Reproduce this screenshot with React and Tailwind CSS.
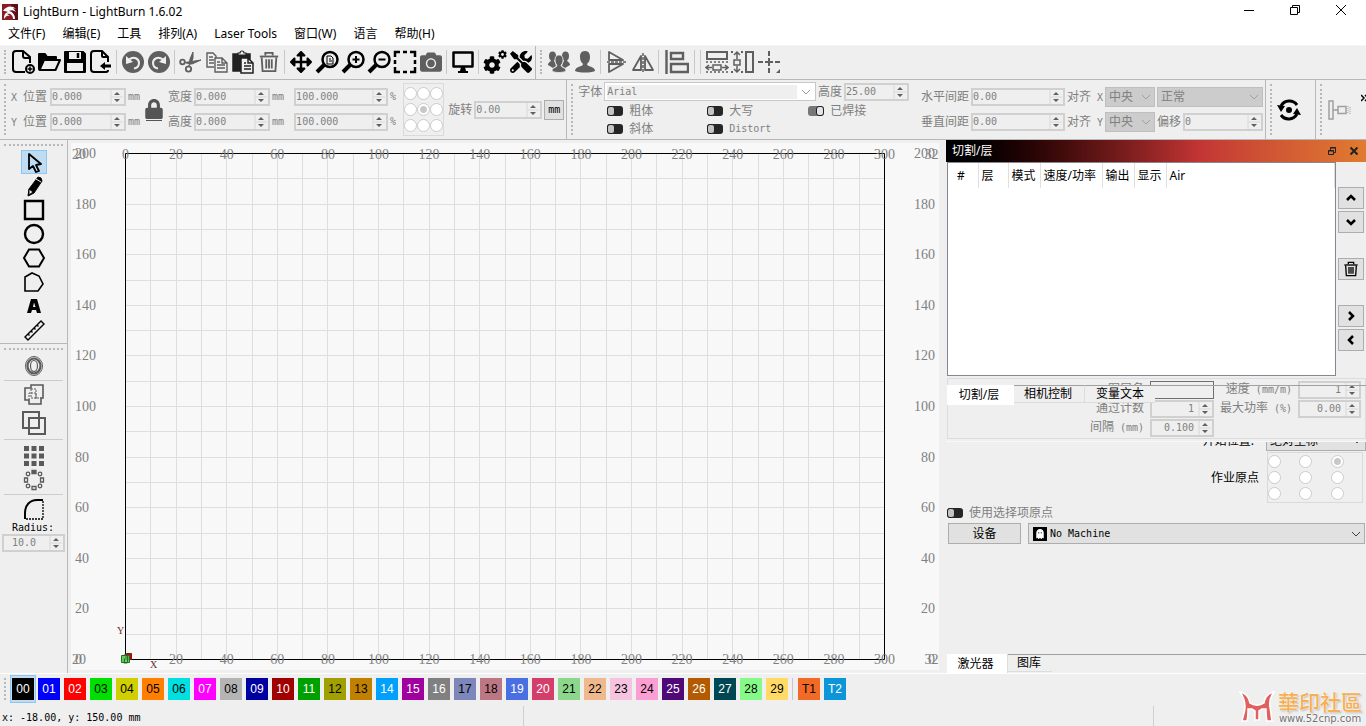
import { FaArrowsAlt, FaCamera, FaCog, FaLock, FaTools, FaGhost } from 'react-icons/fa'

const LAYERS = [
    { name: '00', className: 'bg-[#000000] text-white' },
    { name: '01', className: 'bg-[#0000ff] text-white' },
    { name: '02', className: 'bg-[#ff0000] text-white' },
    { name: '03', className: 'bg-[#00e000] text-black' },
    { name: '04', className: 'bg-[#d0d000] text-black' },
    { name: '05', className: 'bg-[#ff8000] text-black' },
    { name: '06', className: 'bg-[#00e0e0] text-black' },
    { name: '07', className: 'bg-[#ff00ff] text-white' },
    { name: '08', className: 'bg-[#b4b4b4] text-black' },
    { name: '09', className: 'bg-[#0000a0] text-white' },
    { name: '10', className: 'bg-[#a00000] text-white' },
    { name: '11', className: 'bg-[#00a000] text-white' },
    { name: '12', className: 'bg-[#a0a000] text-black' },
    { name: '13', className: 'bg-[#c08000] text-black' },
    { name: '14', className: 'bg-[#00a0ff] text-white' },
    { name: '15', className: 'bg-[#a000a0] text-white' },
    { name: '16', className: 'bg-[#808080] text-white' },
    { name: '17', className: 'bg-[#7d87b9] text-black' },
    { name: '18', className: 'bg-[#bb7784] text-black' },
    { name: '19', className: 'bg-[#4a6fe3] text-white' },
    { name: '20', className: 'bg-[#d33f6a] text-white' },
    { name: '21', className: 'bg-[#8cd78c] text-black' },
    { name: '22', className: 'bg-[#f0b98d] text-black' },
    { name: '23', className: 'bg-[#f6c4e1] text-black' },
    { name: '24', className: 'bg-[#fa9ed4] text-black' },
    { name: '25', className: 'bg-[#500a78] text-white' },
    { name: '26', className: 'bg-[#b45a00] text-white' },
    { name: '27', className: 'bg-[#004754] text-white' },
    { name: '28', className: 'bg-[#86fa88] text-black' },
    { name: '29', className: 'bg-[#ffdb66] text-black' }
]

const TOOL_LAYERS = [
    { name: 'T1', className: 'bg-[#f36926] text-black' },
    { name: 'T2', className: 'bg-[#0c96d9] text-white' }
]

const MENUS = ['文件(F)', '编辑(E)', '工具', '排列(A)', 'Laser Tools', '窗口(W)', '语言', '帮助(H)']

/* ---------- icons ---------- */

function Svg({ children, size = 24, ...props }) {
    return (
        <svg width={size} height={size} viewBox="0 0 24 24" fill="none" stroke="currentColor" aria-hidden="true" className="shrink-0" {...props}>
            {children}
        </svg>
    )
}

const NewIcon = () => (
    <Svg strokeWidth="2">
        <path d="M14 22H5a3 3 0 0 1-3-3V4a3 3 0 0 1 3-3h7l7 6v6M12 1v5a2 2 0 0 0 2 2h5" />
        <circle cx="19" cy="19" r="4" />
        <path d="M19 16.500v5M16.500 19h5" strokeWidth="1.500" />
    </Svg>
)

const OpenIcon = () => (
    <Svg strokeWidth="2" strokeLinejoin="round">
        <path d="M2 19V4h6l2 3h9v3H7z" fill="currentColor" />
        <path d="M2.500 20 7 10h16l-4.500 10z" fill="#efefef" />
    </Svg>
)

const SaveIcon = () => (
    <Svg strokeWidth="2" strokeLinejoin="round">
        <path d="M2 2h18l2 2v18H2z" fill="currentColor" />
        <path d="M4 13h16v8H4z" fill="#efefef" stroke="none" />
        <path d="M6 2h12v7H6z" fill="#efefef" stroke="none" />
        <path d="M15 3v5" strokeWidth="2.500" />
    </Svg>
)

const ExportIcon = () => (
    <Svg strokeWidth="2">
        <path d="M19 20a2 2 0 0 1-2 2H5a3 3 0 0 1-3-3V4a3 3 0 0 1 3-3h8l6 6v5M13 1v5a1 1 0 0 0 1 1h5" />
        <path d="M11 16l5-4v2.500h6v3h-6V20z" fill="currentColor" stroke="none" />
    </Svg>
)

const UndoIcon = ({ flip }) => (
    <Svg>
        <g transform={flip ? 'translate(24 0) scale(-1 1)' : undefined}>
            <circle cx="12" cy="12" r="11" fill="currentColor" stroke="none" />
            <path d="M8 9.500c5-3.500 10-1 10 3.500 0 3-2 5-5 5.500" stroke="#efefef" strokeWidth="2" />
            <path d="M5 6v8l7-2z" fill="#efefef" stroke="none" />
        </g>
    </Svg>
)

const CutIcon = () => (
    <Svg strokeWidth="1.800">
        <circle cx="3.500" cy="12" r="2.300" />
        <circle cx="9.500" cy="19" r="2.700" />
        <path d="M6 12.500l16-2.500-9 4-6-1M10 16l1-7 3-7v6l-2 6" fill="currentColor" strokeWidth="1" />
    </Svg>
)

const CopyIcon = () => (
    <Svg strokeWidth="1.400">
        <path d="M9 17H2V3h6l3 3v2M4 7h4M4 10h5M4 13h5" />
        <path d="M10 8h7l5 5v9H10zM17 8v5h5M12 12h3M12 15h8M12 18h8" fill="#efefef" />
    </Svg>
)

const PasteIcon = () => (
    <Svg strokeWidth="1.500">
        <path d="M2 4h17v5h-8v12H2z" fill="currentColor" />
        <path d="M7 5V3h2a2 2 0 0 1 4 0h2v2z" fill="#efefef" strokeWidth="1.200" />
        <path d="M10 8h7l5 5v10H10zM17 8v5h5M13 13h2M13 16h7M13 19h7" fill="#efefef" />
    </Svg>
)

const TrashIcon = ({ size }) => (
    <Svg size={size} strokeWidth="2">
        <path d="M2 5h20v2H2z" fill="currentColor" stroke="none" />
        <path d="M8 5V2h8v3M4 7l1 15h14l1-15M9 9v10M12 9v10M15 9v10" />
    </Svg>
)

const ZoomIcon = ({ children }) => (
    <Svg strokeWidth="3">
        <circle cx="15" cy="9.500" r="7.500" strokeWidth="2.500" />
        <path d="M9 15l-7 7" strokeWidth="4" />
        {children}
    </Svg>
)

const MarqueeIcon = () => (
    <Svg strokeWidth="2.500">
        <path d="M2 7V2h5M17 2h5v5M22 17v5h-5M7 22H2v-5M10 2h4M10 22h4M2 10v4M22 10v4" />
    </Svg>
)

const MonitorIcon = () => (
    <Svg strokeWidth="2.500">
        <path d="M2.500 2.500h19v14h-19z" strokeLinejoin="round" />
        <path d="M10 17h4l1 4h2v2H7v-2h2z" fill="currentColor" stroke="none" />
    </Svg>
)

const GearsIcon = () => (
    <Svg>
        <FaCog x="0" y="6" width="18" height="18" size={18} />
        <FaCog x="15" y="0" width="9" height="9" size={9} />
    </Svg>
)

const UsersIcon = () => (
    <Svg fill="currentColor" stroke="none">
        <ellipse cx="5.500" cy="6" rx="3.500" ry="4.500" />
        <ellipse cx="18.500" cy="6" rx="3.500" ry="4.500" />
        <path d="M1 15c0-3 2-2 3-5h3l2 6-3 2zM23 15c0-3-2-2-3-5h-3l-2 6 3 2z" />
        <path d="M12 5c3 0 4 2 4 5s-1 4-2 5c0 3 5 2 5 6-3 2-11 2-14 0 0-4 5-3 5-6-1-1-2-2-2-5s1-5 4-5z" stroke="#efefef" strokeWidth=".8" />
    </Svg>
)

const UserIcon = () => (
    <Svg fill="currentColor" stroke="none">
        <path d="M12 1c4 0 5 3 5 6s-1 5-3 7c0 3 8 2 8 7-5 2-15 2-20 0 0-5 8-4 8-7-2-2-3-4-3-7s1-6 5-6z" />
    </Svg>
)

const FlipIcon = ({ turned }) => (
    <Svg strokeWidth="1.800">
        <g transform={turned ? 'rotate(-90 12 12)' : undefined}>
            <path d="M4 2v8h14zM4 22v-8h14z" strokeLinejoin="round" />
            <path d="M2 12h20" strokeDasharray="3 1" strokeWidth="1.500" />
        </g>
    </Svg>
)

const AlignIcon = () => (
    <Svg strokeWidth="2.400">
        <path d="M1.500 0v24M6 3h12v6H6zM6 14h17v8H6z" />
    </Svg>
)

const SpreadHIcon = () => (
    <Svg strokeWidth="2">
        <path d="M2 2h20v7H2z" />
        <path d="M1 12h22M1 22h22" strokeDasharray="2 2" strokeWidth="1.500" />
        <path d="M8 15h8v5H8zM1 17.500h6M23 17.500h-6M4 15l-3 2.500 3 2.500M20 15l3 2.500-3 2.500" strokeWidth="1.500" />
    </Svg>
)

const SpreadVIcon = () => (
    <Svg strokeWidth="2">
        <path d="M15 2h7v20h-7z" />
        <path d="M1 1v22M11 1v22" strokeDasharray="2 18" strokeWidth="2" />
        <path d="M3 10h6v5H3zM6 2v7M6 22v-6M3 5l3-3 3 3M3 19l3 3 3-3" strokeWidth="1.500" />
    </Svg>
)

const CenterIcon = () => (
    <Svg strokeWidth="2">
        <path d="M1 12h5M8 12h8M18 12h5M12 1v5M12 8v8M12 18v5" />
        <path d="M23 19v4h-4z" fill="currentColor" stroke="none" />
    </Svg>
)

const CursorIcon = () => (
    <Svg strokeWidth="1.800" strokeLinejoin="round">
        <path d="M7 4v15l4-3 3 6 3-1-3-6 5-1z" />
    </Svg>
)

const PencilIcon = () => (
    <Svg strokeWidth="1">
        <path d="M16 3l3 1 1 3-8 12-6 3 1-7z" fill="currentColor" />
        <path d="M7 15l4 3-4 3z" fill="#efefef" />
        <path d="M14 5l5 3" stroke="#efefef" />
    </Svg>
)

const TextIcon = () => (
    <Svg fill="currentColor" stroke="none" fillRule="evenodd">
        <path d="M9 5h6l4 14h-4l-1-3h-4l-1 3H5zM11 13h2.500L12 8.500z" />
    </Svg>
)

const RulerIcon = () => (
    <Svg strokeWidth="1.400">
        <path d="M3 19L19 3l3 3L6 22zM6 16l1.500 1.500M9 13l1.500 1.500M12 10l1.500 1.500M15 7l1.500 1.500" />
    </Svg>
)

const OffsetIcon = () => (
    <Svg strokeWidth="1.500">
        <ellipse cx="12" cy="12" rx="8.500" ry="9.500" strokeWidth="1" />
        <ellipse cx="12" cy="12" rx="6.500" ry="7.500" strokeWidth="2.200" />
        <ellipse cx="12" cy="12" rx="3.500" ry="5.500" strokeWidth="1.200" />
    </Svg>
)

const UnionIcon = () => (
    <Svg strokeWidth="1.600">
        <path d="M9 2h12v13h-2v6H7v-4H3V5h6z" />
        <path d="M9 6v9h10M7 17v-7h7v7M14 15V6H9" strokeDasharray="2 1" strokeWidth="1" />
    </Svg>
)

const SubtractIcon = () => (
    <Svg strokeWidth="2">
        <path d="M1 1h16v16H1zM7 7h16v16H7z" />
    </Svg>
)

const GridIcon = () => (
    <Svg strokeWidth="5" strokeDasharray="5 2.500">
        <path d="M2 4.500h20M2 12h20M2 19.500h20" />
    </Svg>
)

const DialIcon = () => (
    <Svg strokeWidth="1.300">
        <path d="M10 2.500h4v3h-4z" fill="currentColor" />
        <path d="M10 18.500h4v3h-4zM2.500 10h3v4h-3zM18.500 10h3v4h-3z" />
        <circle cx="6" cy="6" r="1.800" />
        <circle cx="18" cy="6" r="1.800" />
        <circle cx="6" cy="18" r="1.800" />
        <circle cx="18" cy="18" r="1.800" />
    </Svg>
)

const RadiusIcon = () => (
    <Svg strokeWidth="2">
        <path d="M3 22v-6C3 8 8 3 15 3h6" />
        <path d="M21 4v18H3" strokeDasharray="2 1" strokeWidth="1.300" />
    </Svg>
)

const RotateIcon = () => (
    <Svg strokeWidth="3">
        <path d="M4 8a9.500 9.500 0 0 1 16-1M20 16a9.500 9.500 0 0 1-16 1" />
        <circle cx="12" cy="12" r="3" fill="currentColor" stroke="none" />
        <path d="M0 7l8 1-4 6zM24 17l-8-1 4-6z" fill="currentColor" stroke="none" />
    </Svg>
)

const DockIcon = () => (
    <Svg strokeWidth="1.500" stroke="#a0a0a0">
        <path d="M2 3h4v18H2zM6 12h5M11 8.500h8v7h-8z" />
        <path d="M21 8v8M23 9v7" strokeDasharray="1 1" strokeWidth="1" />
    </Svg>
)

const Chevron = ({ d, thick }) => (
    <svg width="10" height="10" viewBox="0 0 10 10" fill="none" stroke="currentColor" strokeWidth={thick ? 2.5 : 1} aria-hidden="true">
        <path d={d} />
    </svg>
)

/* ---------- controls ---------- */

function ToolButton({ label, children, className = '' }) {
    return (
        <button type="button" aria-label={label} className={`flex h-6 w-[26px] shrink-0 items-center justify-center ${className}`}>
            {children}
        </button>
    )
}

const Divider = () => <div className="mx-[2px] h-6 w-px shrink-0 border-l border-[#c8c8c8] pr-[1px]" />

const Handle = () => <div className="my-[4px] ml-[4px] mr-[5px] shrink-0 self-stretch border-l-2 border-dotted border-[#b8b8b8]" />

const HandleAcross = () => <div className="mx-[4px] my-[4px] border-t-2 border-dotted border-[#b8b8b8]" />

function Spin({ id, value, className, right, label }) {
    return (
        <div className={`flex h-[18px] shrink-0 items-center border-2 border-[#d0d0d0] ${className}`}>
            <input
                id={id}
                aria-label={label}
                defaultValue={value}
                className={`w-0 min-w-0 flex-1 bg-transparent font-['DejaVu_Sans_Mono',monospace] text-[10px] leading-[14px] text-[#808080] outline-none ${right ? 'pr-[4px] text-right' : ''}`}
            />
            <svg width="14" height="14" viewBox="0 0 14 14" className="shrink-0" aria-hidden="true">
                <path d="M1 0v14M1 7h12" stroke="#d8d8d8" />
                <path d="M4 5l3-3 3 3zM4 9l3 3 3-3z" fill="#606060" />
            </svg>
        </div>
    )
}

function Text({ htmlFor, children, mono, className = '' }) {
    return (
        <label htmlFor={htmlFor} className={`shrink-0 whitespace-pre text-[12px] leading-4 ${className}`}>
            {children}
            {mono && <span className="font-['DejaVu_Sans_Mono',monospace] text-[10px]">{mono}</span>}
        </label>
    )
}

const Unit = ({ children }) => <span className="shrink-0 font-['DejaVu_Sans_Mono',monospace] text-[10px] leading-4">{children}</span>

function Combo({ id, value, label, className, chevron = 'text-[#a0a0a0]' }) {
    return (
        <div className={`relative flex items-center border ${className}`}>
            <select id={id} aria-label={label} className="h-full w-full appearance-none bg-transparent pl-[3px] text-[12px] leading-4 outline-none">
                <option>{value}</option>
            </select>
            <span className={`pointer-events-none absolute right-[3px] ${chevron}`}>
                <Chevron d="M1 3l4 4 4-4" />
            </span>
        </div>
    )
}

function Toggle({ text, mono, on }) {
    return (
        <label className="flex items-center gap-[6px] text-[12px] leading-4">
            <input
                type="checkbox"
                defaultChecked={on}
                className="relative h-[10px] w-4 appearance-none rounded-[3px] bg-[#262626] before:absolute before:left-0 before:top-0 before:h-[10px] before:w-2 before:rounded-[3px] before:border before:border-[#202020] before:bg-[#c4c4c4] checked:bg-[#777777] checked:before:left-2 checked:before:bg-[#e4e4e4]"
            />
            {text}
            {mono && <span className="font-['DejaVu_Sans_Mono',monospace] text-[10px]">{mono}</span>}
        </label>
    )
}

function Origin({ name, checked, className }) {
    return (
        <div role="radiogroup" aria-label={name} className={`grid shrink-0 grid-cols-3 border border-[#dadada] ${className}`}>
            {Array.from({ length: 9 }, (_, i) => (
                <input
                    key={i}
                    type="radio"
                    name={name}
                    aria-label={`${name} ${i + 1}`}
                    defaultChecked={i === checked}
                    className="h-[13px] w-[13px] appearance-none rounded-full border border-[#cccccc] bg-white checked:bg-[radial-gradient(circle,#c8c8c8_0_3px,#ffffff_4px)]"
                />
            ))}
        </div>
    )
}

/* ---------- page parts ---------- */

function TitleBar() {
    return (
        <header className="bg-white text-black">
            <div className="flex h-[23px] items-center pl-[2px] pr-[19px]">
                <svg width="16" height="16" viewBox="0 0 16 16" aria-hidden="true">
                    <path d="M0 0h16v16H0z" fill="#8c1c24" />
                    <path d="M9 0h7v16h-5z" fill="#5c0f18" />
                    <path d="M1 7c3-5 9-6 13-2l-3-1 3 4c-3-2-5-2-7-1 4 1 6 4 6 8h-2c0-4-3-6-6-5l3 2c-3-1-4 0-6 3 0-4 1-6 4-7-2-1-3-1-5-1z" fill="#ffffff" />
                </svg>
                <h1 className="ml-[5px] flex-1 text-[12px] leading-4">LightBurn - LightBurn 1.6.02</h1>
                <div className="flex items-center gap-[34px] pb-[3px]">
                    <button type="button" aria-label="Minimize">
                        <svg width="12" height="12" viewBox="0 0 12 12" stroke="#000000"><path d="M1 6.500h10" /></svg>
                    </button>
                    <button type="button" aria-label="Restore">
                        <svg width="12" height="12" viewBox="0 0 12 12" stroke="#000000" fill="none"><path d="M1.500 3.500h7v7h-7zM3.500 3V1.500h7v7H9" /></svg>
                    </button>
                    <button type="button" aria-label="Close">
                        <svg width="12" height="12" viewBox="0 0 12 12" stroke="#000000"><path d="M1 1l10 10M11 1L1 11" /></svg>
                    </button>
                </div>
            </div>
            <nav className="flex h-[23px] items-center gap-[17px] border-b border-[#f4f4f4] pl-2">
                {MENUS.map(menu => (
                    <button key={menu} type="button" className="text-[12px] leading-4">{menu}</button>
                ))}
            </nav>
        </header>
    )
}

function MainToolbar() {
    return (
        <div className="flex h-[34px] items-center border-b border-[#b8b8b8] text-black">
            <div className="flex h-full items-center border-r border-[#b8b8b8] pb-px pr-px">
                <Handle />
                <div className="-ml-px flex items-center">
                    <ToolButton label="New"><NewIcon /></ToolButton>
                    <ToolButton label="Open"><OpenIcon /></ToolButton>
                    <ToolButton label="Save"><SaveIcon /></ToolButton>
                    <ToolButton label="Import"><ExportIcon /></ToolButton>
                    <Divider />
                    <ToolButton label="Undo" className="text-[#5f5f5f]"><UndoIcon /></ToolButton>
                    <ToolButton label="Redo" className="text-[#5f5f5f]"><UndoIcon flip /></ToolButton>
                    <Divider />
                    <ToolButton label="Cut" className="text-[#5f5f5f]"><CutIcon /></ToolButton>
                    <ToolButton label="Copy" className="text-[#5f5f5f]"><CopyIcon /></ToolButton>
                    <ToolButton label="Paste" className="text-[#222222]"><PasteIcon /></ToolButton>
                    <ToolButton label="Delete" className="text-[#5f5f5f]"><TrashIcon size={22} /></ToolButton>
                    <Divider />
                    <ToolButton label="Pan"><FaArrowsAlt size={22} /></ToolButton>
                    <ToolButton label="Zoom to page">
                        <ZoomIcon><path d="M12 6h4l2 2v6h-6zM14 9h2M14 11h3" strokeWidth="1" /></ZoomIcon>
                    </ToolButton>
                    <ToolButton label="Zoom in"><ZoomIcon><path d="M11.500 9.500h7M15 6v7" strokeWidth="2" /></ZoomIcon></ToolButton>
                    <ToolButton label="Zoom out"><ZoomIcon><path d="M11.500 9.500h7" strokeWidth="2" /></ZoomIcon></ToolButton>
                    <ToolButton label="Frame selection"><MarqueeIcon /></ToolButton>
                    <ToolButton label="Camera" className="text-[#5f5f5f]"><FaCamera size={22} /></ToolButton>
                    <Divider />
                    <ToolButton label="Preview"><MonitorIcon /></ToolButton>
                    <Divider />
                    <ToolButton label="Settings"><GearsIcon /></ToolButton>
                    <ToolButton label="Device settings"><FaTools size={22} /></ToolButton>
                </div>
            </div>
            <div className="flex h-full items-center pb-px text-[#5f5f5f]">
                <Handle />
                <div className="-ml-px flex items-center">
                    <ToolButton label="Group"><UsersIcon /></ToolButton>
                    <ToolButton label="Ungroup"><UserIcon /></ToolButton>
                    <Divider />
                    <ToolButton label="Flip vertical"><FlipIcon /></ToolButton>
                    <ToolButton label="Flip horizontal"><FlipIcon turned /></ToolButton>
                    <Divider />
                    <ToolButton label="Align left" className="mx-[2px]"><AlignIcon /></ToolButton>
                    <Divider />
                    <Divider />
                    <ToolButton label="Distribute horizontally"><SpreadHIcon /></ToolButton>
                    <ToolButton label="Distribute vertically"><SpreadVIcon /></ToolButton>
                    <ToolButton label="Move to centre"><CenterIcon /></ToolButton>
                </div>
            </div>
        </div>
    )
}

function Row({ children }) {
    return <div className="flex h-[18px] items-center gap-[2px]">{children}</div>
}

function PropertyToolbar() {
    return (
        <div className="flex h-[60px] border-b border-[#b8b8b8] text-[#808080]">
            <section className="flex items-center border-r border-[#b8b8b8] pr-[2px]">
                <Handle />
                <div className="flex flex-col gap-[7px]">
                    <Row>
                        <Text htmlFor="xpos" className="w-[37px]"><span className="font-['DejaVu_Sans_Mono',monospace] text-[10px]">X </span>位置</Text>
                        <Spin id="xpos" value="0.000" className="w-[76px]" /><Unit>mm</Unit>
                    </Row>
                    <Row>
                        <Text htmlFor="ypos" className="w-[37px]"><span className="font-['DejaVu_Sans_Mono',monospace] text-[10px]">Y </span>位置</Text>
                        <Spin id="ypos" value="0.000" className="w-[76px]" /><Unit>mm</Unit>
                    </Row>
                </div>
                <button type="button" aria-label="Lock aspect" className="mx-[4px] flex w-5 flex-col items-center gap-px text-[#555555]">
                    <FaLock size={20} />
                    <span className="h-px w-4 bg-[#555555]" />
                </button>
                <div className="flex flex-col gap-[7px]">
                    <Row>
                        <Text htmlFor="width">宽度</Text>
                        <Spin id="width" value="0.000" className="w-[76px]" /><Unit>mm</Unit>
                        <Spin label="宽度 %" value="100.000" className="ml-2 w-[94px]" /><Unit>%</Unit>
                    </Row>
                    <Row>
                        <Text htmlFor="height">高度</Text>
                        <Spin id="height" value="0.000" className="w-[76px]" /><Unit>mm</Unit>
                        <Spin label="高度 %" value="100.000" className="ml-2 w-[94px]" /><Unit>%</Unit>
                    </Row>
                </div>
                <Origin name="anchor" checked={4} className="ml-[7px] mr-[4px] gap-y-[3px] py-[3px]" />
                <Row>
                    <Text htmlFor="rotate">旋转</Text>
                    <Spin id="rotate" value="0.00" className="w-[68px]" />
                    <button type="button" className="h-5 w-5 border border-[#adadad] bg-[#e1e1e1] font-['DejaVu_Sans_Mono',monospace] text-[10px] text-black">mm</button>
                </Row>
            </section>
            <section className="flex min-w-0 flex-1 items-center border-r border-[#b8b8b8] pr-[2px]">
                <Handle />
                <div className="mr-3 flex min-w-0 flex-1 flex-col gap-[2px]">
                    <div className="flex items-center gap-[2px]">
                        <Text htmlFor="font">字体</Text>
                        <div className="relative flex h-[19px] min-w-0 flex-1 items-center border border-[#c8c8c8] bg-white px-[2px]">
                            <select id="font" className="h-[14px] w-full appearance-none bg-[#efefef] font-['DejaVu_Sans_Mono',monospace] text-[10px] leading-[14px] outline-none">
                                <option>Arial</option>
                            </select>
                            <span className="pointer-events-none absolute right-0 flex h-full w-[18px] items-center justify-center bg-white text-[#a0a0a0]">
                                <Chevron d="M1 3l4 4 4-4" />
                            </span>
                        </div>
                        <Text htmlFor="fontsize">高度</Text>
                        <Spin id="fontsize" value="25.00" className="w-[65px]" />
                    </div>
                    <div className="grid grid-cols-[100px_101px_1fr] gap-y-[2px] pl-[29px]">
                        <Toggle text="粗体" />
                        <Toggle text="大写" />
                        <Toggle text="已焊接" on />
                        <Toggle text="斜体" />
                        <Toggle mono="Distort" />
                    </div>
                </div>
                <div className="flex flex-col gap-[7px]">
                    <Row>
                        <Text htmlFor="hspace">水平间距</Text>
                        <Spin id="hspace" value="0.00" className="w-[94px]" />
                        <Text htmlFor="alignx" mono=" X">对齐</Text>
                        <Combo id="alignx" value="中央" className="h-5 w-[50px] border-[#bfbfbf] bg-[#cccccc]" />
                        <Combo label="模式" value="正常" className="h-5 w-[106px] border-[#bfbfbf] bg-[#cccccc]" />
                    </Row>
                    <Row>
                        <Text htmlFor="vspace">垂直间距</Text>
                        <Spin id="vspace" value="0.00" className="w-[94px]" />
                        <Text htmlFor="aligny" mono=" Y">对齐</Text>
                        <Combo id="aligny" value="中央" className="h-5 w-[50px] border-[#bfbfbf] bg-[#cccccc]" />
                        <Text htmlFor="offset">偏移</Text>
                        <Spin id="offset" value="0" className="w-20" />
                    </Row>
                </div>
            </section>
            <section className="flex items-center border-r border-[#b8b8b8] pr-[14px]">
                <Handle />
                <button type="button" aria-label="Refresh" className="text-black"><RotateIcon /></button>
            </section>
            <section className="flex items-center">
                <Handle />
                <button type="button" aria-label="Dock"><DockIcon /></button>
                <button type="button" aria-label="More" className="mb-6 ml-[10px] w-[5px] overflow-hidden text-black">
                    <svg width="8" height="8" viewBox="0 0 8 8" fill="none" stroke="currentColor" strokeWidth="1.500"><path d="M4 1l3 3-3 3M0 1l3 3-3 3" /></svg>
                </button>
            </section>
        </div>
    )
}

function SideTools() {
    const draw = [
        ['Pencil', <PencilIcon />],
        ['Rectangle', <Svg strokeWidth="2.400"><path d="M3 3h18v18H3z" /></Svg>],
        ['Ellipse', <Svg strokeWidth="2.400"><circle cx="12" cy="12" r="9" /></Svg>],
        ['Polygon', <Svg strokeWidth="2"><path d="M7 3.500h10l5 8.500-5 8.500H7L2 12z" /></Svg>],
        ['Edit nodes', <Svg strokeWidth="1.600"><path d="M3 21V7l7-4 7 3 4 8-5 7z" /></Svg>],
        ['Text', <TextIcon />],
        ['Measure', <RulerIcon />]
    ]

    return (
        <aside className="w-[68px] shrink-0 border-r border-[#b8b8b8] text-black">
            <div className="border-b border-[#b8b8b8] pb-px">
                <HandleAcross />
                <div className="flex flex-col items-center">
                    <button type="button" aria-label="Select" className="flex h-6 w-[26px] items-center justify-center border border-[#8ec6f0] bg-[#bfdcf3]"><CursorIcon /></button>
                    {draw.map(([label, icon]) => <ToolButton key={label} label={label}>{icon}</ToolButton>)}
                </div>
            </div>
            <div className="text-[#5a5a5a]">
                <HandleAcross />
                <div className="flex flex-col items-center px-1">
                    <ToolButton label="Offset"><OffsetIcon /></ToolButton>
                    <div className="my-[2px] w-full border-t border-[#cccccc]" />
                    <ToolButton label="Union"><UnionIcon /></ToolButton>
                    <ToolButton label="Subtract" className="my-[4px]"><SubtractIcon /></ToolButton>
                    <div className="mb-[4px] w-full border-t border-[#cccccc]" />
                    <ToolButton label="Grid array"><GridIcon /></ToolButton>
                    <ToolButton label="Circular array"><DialIcon /></ToolButton>
                    <div className="my-[2px] w-full border-t border-[#cccccc]" />
                    <ToolButton label="Radius tool" className="text-black"><RadiusIcon /></ToolButton>
                </div>
                <label htmlFor="radius" className="block pl-3 pt-px font-['DejaVu_Sans_Mono',monospace] text-[10px] leading-3 text-black">Radius:</label>
                <Spin id="radius" value="10.0" className="mx-[2px] w-[63px] pl-2" />
            </div>
        </aside>
    )
}

function Workspace() {
    const step = 50.6
    const xs = Array.from({ length: 29 }, (_, i) => Math.round(54 + (i + 1) * 25.3) + 0.5)
    const ys = Array.from({ length: 19 }, (_, i) => Math.round(10 + (i + 1) * 25.3) + 0.5)

    return (
        <svg viewBox="0 0 868 527" className="block h-full w-full bg-[#f8f8f8]" role="img" aria-label="workspace">
            <g stroke="#dedede">
                {xs.map(x => <path key={x} d={`M${x} 10V516`} />)}
                {ys.map(y => <path key={y} d={`M54 ${y}H813`} />)}
            </g>
            <path d="M54.500 10.500h759v506h-759z" fill="none" stroke="#000000" />
            <g fill="#808080" fontSize="14" fontFamily="'Liberation Serif', serif">
                {Array.from({ length: 17 }, (_, i) => (
                    <g key={i} textAnchor="middle">
                        <text x={54.5 + i * step} y="16">{i * 20}</text>
                        <text x={54.5 + i * step} y="521">{i * 20}</text>
                    </g>
                ))}
                {/* the -20 mark is held against the left edge */}
                <text x="1" y="16">20</text>
                <text x="1" y="521">20</text>
                {Array.from({ length: 11 }, (_, i) => (
                    <g key={i}>
                        <text x="4" y={521 - i * step}>{i * 20}</text>
                        <text x="864" y={521 - i * step} textAnchor="end">{i * 20}</text>
                    </g>
                ))}
            </g>
            <g fill="#6b2a2a" fontSize="10" fontFamily="'Liberation Serif', serif">
                <text x="46" y="491">Y</text>
                <text x="79" y="525">X</text>
            </g>
            <path d="M55.500 510.500h5v6h-5z" fill="#d00000" stroke="#702020" />
            <path d="M50.500 512.500h8v7h-8z" fill="#50d050" fillOpacity=".8" stroke="#207020" />
            <path d="M53.500 515.500v4M56.500 512.500v7" stroke="#207020" />
        </svg>
    )
}

function SideButton({ label, children, className }) {
    return (
        <button type="button" aria-label={label} className={`flex h-[22px] w-[26px] items-center justify-center border border-[#adadad] bg-[#e1e1e1] text-black ${className}`}>
            {children}
        </button>
    )
}

function CutsPanel() {
    const columns = [
        ['#', 'w-[30px] pl-[9px]'],
        ['层', 'w-[30px]'],
        ['模式', 'w-[32px]'],
        ['速度/功率', 'w-[62px]'],
        ['输出', 'w-[32px]'],
        ['显示', 'w-[32px]'],
        ['Air', '']
    ]

    return (
        <section>
            <div className="flex h-[22px] items-center bg-linear-to-r from-black via-[#c23434] via-60% to-[#e07b30] pl-[6px] pr-[7px]">
                <h2 className="flex-1 text-[12px] leading-4 text-white">切割/层</h2>
                <button type="button" aria-label="Float" className="mr-3">
                    <svg width="10" height="10" viewBox="0 0 10 10" fill="none" stroke="#222222"><path d="M1.500 4.500h5v4h-5zM3.500 4V1.500h5v5H7M3 2h6M1 5h6" /></svg>
                </button>
                <button type="button" aria-label="Close panel">
                    <svg width="10" height="10" viewBox="0 0 10 10" stroke="#222222" strokeWidth="2"><path d="M1.500 1.500l7 7M8.500 1.500l-7 7" /></svg>
                </button>
            </div>
            <div className="flex gap-[2px] pl-px pr-[2px]">
                <div className="h-[214px] min-w-0 flex-1 border border-[#828790] bg-white">
                    <table className="w-full table-fixed border-collapse">
                        <thead>
                            <tr className="h-[25px]">
                                {columns.map(([name, className]) => (
                                    <th key={name} scope="col" className={`border-r border-[#e0e0e0] p-0 pl-[3px] text-left text-[12px] font-normal leading-4 text-black ${className}`}>{name}</th>
                                ))}
                            </tr>
                        </thead>
                    </table>
                </div>
                <div className="flex flex-col pt-[25px]">
                    <SideButton label="Move up"><Chevron thick d="M1 7l4-4 4 4" /></SideButton>
                    <SideButton label="Move down" className="mt-[2px]"><Chevron thick d="M1 3l4 4 4-4" /></SideButton>
                    <SideButton label="Delete layer" className="mt-[25px]"><TrashIcon size={16} /></SideButton>
                    <SideButton label="Next" className="mt-[25px]"><Chevron thick d="M3 1l4 4-4 4" /></SideButton>
                    <SideButton label="Previous" className="mt-[2px]"><Chevron thick d="M7 1L3 5l4 4" /></SideButton>
                </div>
            </div>
            <div className="relative ml-px mt-[2px] h-[61px] border border-[#dcdcdc] text-[#808080]">
                <div className="grid grid-cols-[196px_64px_72px_63px] justify-start gap-x-[6px] gap-y-px pt-[2px] text-right">
                    <Text htmlFor="layername">图层名</Text>
                    <input id="layername" className="h-[18px] w-16 border border-[#707070] outline-none" />
                    <Text htmlFor="speed" mono=" (mm/m)">速度</Text>
                    <Spin id="speed" value="1" right className="w-[63px]" />
                    <Text htmlFor="passes">通过计数</Text>
                    <Spin id="passes" value="1" right className="w-16" />
                    <Text htmlFor="power" mono=" (%)">最大功率</Text>
                    <Spin id="power" value="0.00" right className="w-[63px]" />
                    <Text htmlFor="interval" mono=" (mm)">间隔</Text>
                    <Spin id="interval" value="0.100" right className="w-16" />
                </div>
                {/* the tab strip rides over the top rows of the form */}
                <div role="tablist" className="absolute -left-px -right-px top-[6px] flex items-start text-[12px] leading-4 text-black">
                    <button type="button" role="tab" aria-selected="true" className="h-5 w-[67px] bg-white pr-[3px]">切割/层</button>
                    <button type="button" role="tab" className="h-[18px] w-[71px] border-b border-r border-t border-[#dcdcdc] border-t-[#a0a0a0] bg-[#efefef] pr-[2px]">相机控制</button>
                    <button type="button" role="tab" className="h-[18px] w-[70px] border-b border-t border-[#dcdcdc] border-t-[#a0a0a0] bg-[#efefef]">变量文本</button>
                    <div className="flex-1 border-t border-[#a0a0a0]" />
                </div>
            </div>
        </section>
    )
}

function LaserPanel() {
    return (
        <section className="mt-[2px] flex min-h-0 flex-1 flex-col border-t border-[#f8f8f8] pl-px text-black">
            <div className="overflow-hidden">
                <div className="-mt-[12px] flex items-center justify-end gap-3">
                    <Text htmlFor="startfrom">开始位置:</Text>
                    <Combo id="startfrom" value="绝对坐标" chevron="text-[#505050]" className="h-[21px] w-[100px] border-[#adadad] bg-[#e1e1e1]" />
                </div>
            </div>
            <div className="mt-px flex items-center justify-end gap-2 pr-[3px]">
                <span className="text-[12px] leading-4">作业原点</span>
                <Origin name="job" checked={2} className="w-24 gap-y-[3px] py-[2px]" />
            </div>
            <div className="mt-px py-px text-[#808080]"><Toggle text="使用选择项原点" /></div>
            <div className="mt-px flex gap-[7px] px-px">
                <button type="button" className="h-[21px] w-[73px] border border-[#adadad] bg-[#e1e1e1] text-[12px] leading-4">设备</button>
                <div className="relative flex h-[21px] flex-1 items-center border border-[#adadad] bg-[#e1e1e1]">
                    <span className="ml-[4px] flex h-[14px] w-[14px] shrink-0 items-center justify-center bg-black text-white"><FaGhost size={10} /></span>
                    <select aria-label="Machine" className="w-full appearance-none bg-transparent pl-[3px] font-['DejaVu_Sans_Mono',monospace] text-[10px] leading-4 outline-none">
                        <option>No Machine</option>
                    </select>
                    <span className="pointer-events-none absolute right-[3px] text-[#404040]"><Chevron d="M1 3l4 4 4-4" /></span>
                </div>
            </div>
            <div role="tablist" className="mt-auto flex items-start text-[12px] leading-4">
                <button type="button" role="tab" aria-selected="true" className="h-[19px] w-[61px] border-r border-[#dcdcdc] bg-white pr-[3px]">激光器</button>
                <button type="button" role="tab" className="h-[18px] w-[44px] border-b border-t border-[#dcdcdc] border-t-[#a0a0a0] pr-[2px]">图库</button>
                <div className="flex-1 border-t border-[#a0a0a0]" />
            </div>
        </section>
    )
}

function Swatch({ name, className }) {
    return <button type="button" className={`h-[22px] w-[22px] font-['Liberation_Sans',sans-serif] text-[12px] leading-[22px] ${className}`}>{name}</button>
}

function Palette() {
    const [active, ...rest] = LAYERS

    return (
        <div className="flex h-[33px] items-center border-t border-white pb-[2px]">
            <Handle />
            <div className="-ml-px flex h-7 w-[26px] items-center justify-center border border-[#8ec6f0] bg-[#bfdcf3]">
                <Swatch {...active} />
            </div>
            <div className="ml-[2px] flex items-center gap-[4px]">
                {rest.map(layer => <Swatch key={layer.name} {...layer} />)}
                <div className="mr-px h-[22px] w-px bg-[#c8c8c8]" />
                {TOOL_LAYERS.map(layer => <Swatch key={layer.name} {...layer} />)}
            </div>
        </div>
    )
}

function Watermark() {
    return (
        <div className="absolute bottom-px right-[4px] flex items-center gap-[2px]">
            <svg width="38" height="36" viewBox="0 0 38 36" aria-hidden="true">
                <path
                    d="M2 3c5 1 9 5 10 11 4 3 10 3 14 0 1-6 5-10 10-11-3 4-5 9-4 15 1 5 1 9 2 14h-5c-1-4-1-8-1-12h-4l-3 2v9h-4v-9l-3-2h-4c0 4 0 8-1 12H4c1-5 3-9 3-14C7 12 5 7 2 3z"
                    fill="#e0605e"
                    stroke="#ffffff"
                    strokeWidth="1.500"
                />
            </svg>
            <div className="flex flex-col items-center">
                <span className="font-['Noto_Sans_CJK_TC',sans-serif] text-[21px] font-medium leading-[22px] text-[#f7b050] [text-shadow:0_0_2px_#fff,0_0_2px_#fff,1px_1px_2px_#999]">華印社區</span>
                <span className="font-['DejaVu_Sans',sans-serif] text-[10px] leading-[13px] text-[#707070] [text-shadow:0_0_2px_#fff,0_0_2px_#fff]">www.52cnp.com</span>
            </div>
        </div>
    )
}

export default function App() {
    return (
        <div className="relative flex h-screen min-h-[640px] flex-col overflow-hidden bg-[#efefef] font-['Noto_Sans','Noto_Sans_CJK_SC',sans-serif]">
            <TitleBar />
            <MainToolbar />
            <PropertyToolbar />
            <main className="flex min-h-0 flex-1">
                <SideTools />
                <div className="min-w-0 flex-1 pb-[3px] pl-[3px] pt-[3px]">
                    <Workspace />
                </div>
                <div className="ml-[7px] flex w-[420px] shrink-0 flex-col">
                    <CutsPanel />
                    <LaserPanel />
                </div>
            </main>
            <Palette />
            <footer className="flex h-5 items-center font-['DejaVu_Sans_Mono',monospace] text-[10px] leading-4 text-black">
                <span className="w-[523px] pl-[2px] pt-1">x: -18.00, y: 150.00 mm</span>
                <span className="flex-1 self-stretch border-l border-[#d0d0d0]" />
                <span className="w-[213px] self-stretch border-l border-[#d0d0d0]" />
            </footer>
            <Watermark />
        </div>
    )
}
